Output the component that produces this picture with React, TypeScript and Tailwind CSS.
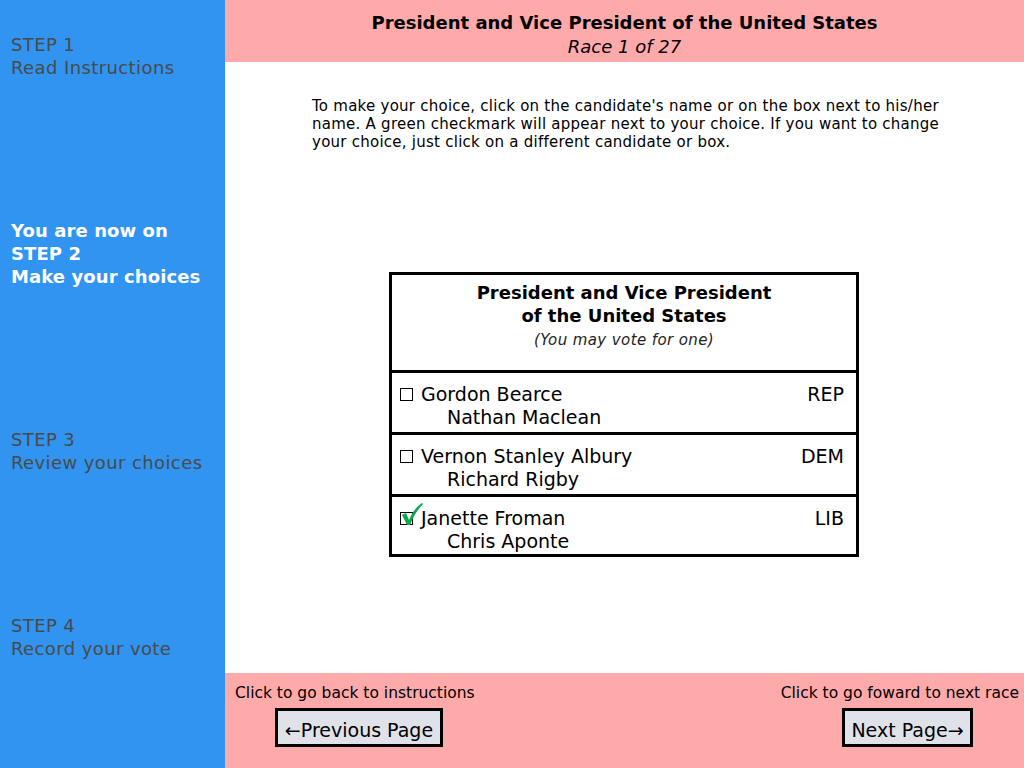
export default function App() {
  return (
    <div className="w-[1024px] h-[768px] flex font-['DejaVu_Sans',sans-serif] bg-white overflow-hidden">
      {/* Sidebar */}
      <aside className="w-[225px] shrink-0 bg-[#3194f0] flex flex-col gap-[140px] pt-[33px] pl-[11px] text-[18px] leading-[23px]">
        <div className="text-[#4a4a4a] tracking-[0.4px]">
          STEP 1<br />Read Instructions
        </div>
        <div className="text-white font-bold tracking-[0.1px]">
          You are now on<br />STEP 2<br />Make your choices
        </div>
        <div className="text-[#4a4a4a] tracking-[0.4px]">
          STEP 3<br />Review your choices
        </div>
        <div className="text-[#4a4a4a] tracking-[0.4px]">
          STEP 4<br />Record your vote
        </div>
      </aside>

      {/* Main */}
      <main className="flex-1 flex flex-col">
        <header className="h-[62px] bg-[#ffaaaa] flex flex-col items-center pt-[11px] text-black">
          <div className="text-[18px] leading-[23px] font-bold">President and Vice President of the United States</div>
          <div className="text-[18px] leading-[25px] italic">Race 1 of 27</div>
        </header>

        <section className="flex-1 flex flex-col">
          <p className="mt-[35px] ml-[87px] w-[660px] text-[15px] leading-[18px] tracking-[0.25px] text-black">
            To make your choice, click on the candidate's name or on the box next to his/her<br />
            name. A green checkmark will appear next to your choice. If you want to change<br />
            your choice, just click on a different candidate or box.
          </p>

          <div className="mt-[121px] ml-[164px] w-[470px] border-[3px] border-black text-black">
            <div className="h-[95px] flex flex-col items-center pt-[6px]">
              <div className="text-[18px] leading-[23px] font-bold text-center">
                President and Vice President<br />of the United States
              </div>
              <div className="text-[15px] leading-[26px] italic tracking-[0.4px] text-[#222]">(You may vote for one)</div>
            </div>
            <Row name="Gordon Bearce" vp="Nathan Maclean" party="REP" />
            <Row name="Vernon Stanley Albury" vp="Richard Rigby" party="DEM" />
            <Row name="Janette Froman" vp="Chris Aponte" party="LIB" checked last />
          </div>
        </section>

        <footer className="h-[95px] bg-[#ffaaaa] flex justify-between pl-[10px] pr-[5px] pt-[11px] text-black">
          <div className="flex flex-col items-start">
            <div className="text-[15.5px] leading-[18px]">Click to go back to instructions</div>
            <button className="ml-[40px] mt-[6px] w-[168px] h-[39px] border-[3px] border-black bg-[#e0e2ea] text-[19px] leading-none pt-[6px]">
              ←Previous Page
            </button>
          </div>
          <div className="flex flex-col items-end">
            <div className="text-[15.5px] leading-[18px]">Click to go foward to next race</div>
            <button className="mr-[46px] mt-[6px] w-[131px] h-[39px] border-[3px] border-black bg-[#e0e2ea] text-[19px] leading-none pt-[6px]">
              Next Page→
            </button>
          </div>
        </footer>
      </main>
    </div>
  );
}

function Row({
  name,
  vp,
  party,
  checked,
  last,
}: {
  name: string;
  vp: string;
  party: string;
  checked?: boolean;
  last?: boolean;
}) {
  return (
    <div className={`${last ? "h-[60px]" : "h-[62px]"} border-t-[3px] border-black flex items-start justify-between pl-[8px] pr-[12px] pt-[10px]`}>
      <div className="flex flex-col text-[19px] leading-[23px]">
        <div className="flex items-center">
          <span className="relative w-[13px] h-[13px] border border-black mr-[8px] shrink-0">
            {checked && (
              <svg className="absolute left-[-1px] top-[-10px] w-[25px] h-[24px]" viewBox="0 0 25 24">
                <path d="M2 12 L6 10 L9 17 C12 10 16 4 22 0 L23 1 C17 7 13 14 10 22 L7 22 Z" fill="#0aa84f" />
              </svg>
            )}
          </span>
          <span>{name}</span>
        </div>
        <div className="pl-[47px]">{vp}</div>
      </div>
      <div className="text-[19px] leading-[23px]">{party}</div>
    </div>
  );
}
